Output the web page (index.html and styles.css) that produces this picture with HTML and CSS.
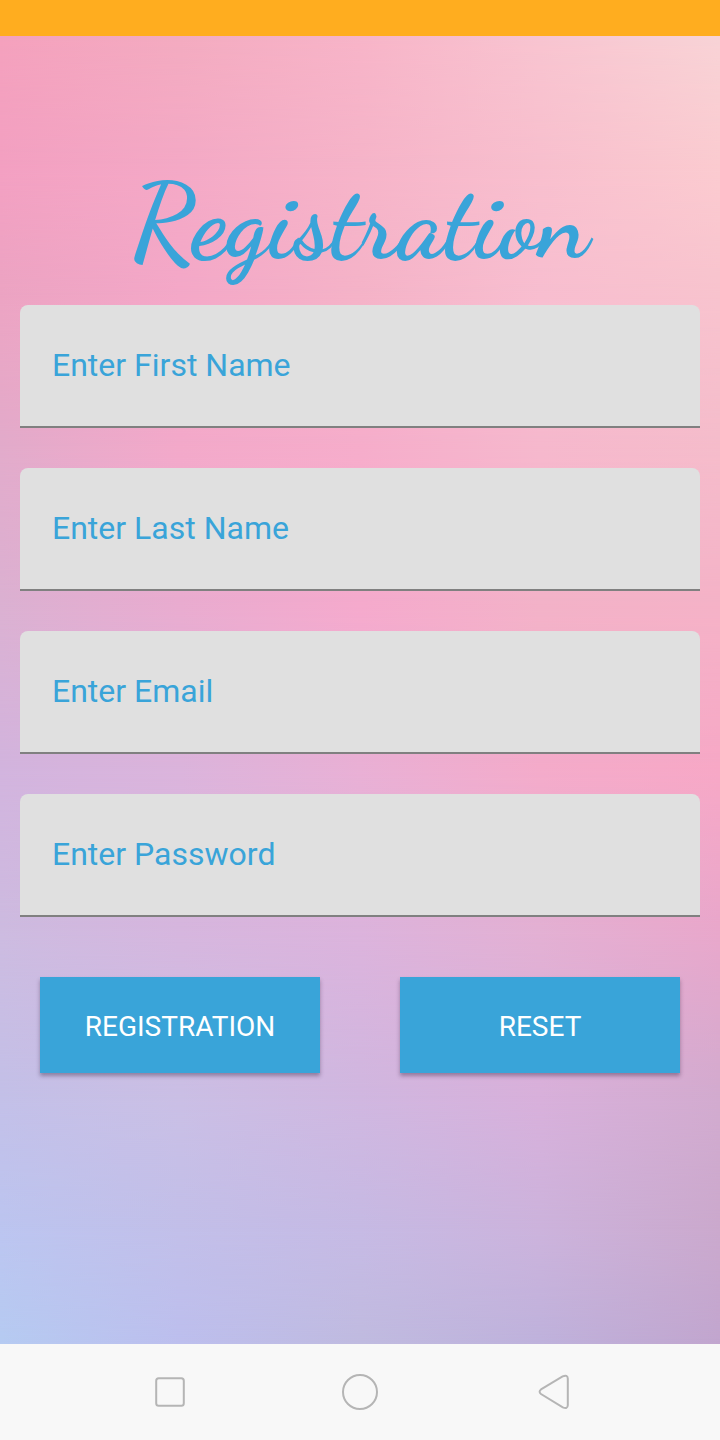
FILE: index.html
```html
<!DOCTYPE html>
<html lang="en">
<head>
<meta charset="utf-8">
<title>Registration</title>
<link rel="stylesheet" href="styles.css">
</head>
<body>
<div class="status"></div>
<main class="screen">
  <div class="wash" aria-hidden="true">
    <i class="tone t10"></i><i class="tone t9"></i><i class="tone t8"></i><i class="tone t7"></i><i class="tone t6"></i>
    <i class="tone t5"></i><i class="tone t4"></i><i class="tone t3"></i><i class="tone t2"></i><i class="tone t1"></i>
  </div>
  <form class="form">
    <h1 class="title">Registration</h1>
    <div class="fields">
      <label class="field">Enter First Name</label>
      <label class="field">Enter Last Name</label>
      <label class="field">Enter Email</label>
      <label class="field">Enter Password</label>
    </div>
    <div class="actions">
      <button class="button" type="button">REGISTRATION</button>
      <button class="button" type="button">RESET</button>
    </div>
  </form>
</main>
<nav class="nav">
  <svg class="icon" viewBox="0 0 40 40"><rect x="6.2" y="6.2" width="27.6" height="27.6" rx="2.5"/></svg>
  <svg class="icon" viewBox="0 0 40 40"><circle cx="20" cy="20" r="17"/></svg>
  <svg class="icon" viewBox="0 0 40 40"><path d="M11 17.4 32.6 4.4Q37.6 2.2 37.8 6.6V33.2Q37.6 37.4 32.8 35.4L11 22Q8.2 19.7 11 17.4Z"/></svg>
</nav>
</body>
</html>
```
FILE: styles.css
```css
* { box-sizing: border-box; }
body { margin: 0; height: 1440px; display: flex; flex-direction: column; font-family: Roboto, sans-serif; overflow: hidden; }
.status { height: 36px; background: #ffad1f; }
.screen { flex: 1; display: grid; grid-template: 1308px / 720px; }
.wash, .form { grid-area: 1 / 1; }
.wash { display: grid; overflow: hidden; }

/* Each tone fades vertically into the one beneath it. */
.tone { grid-area: 1 / 1; background: linear-gradient(90deg, var(--c)); mask-image: linear-gradient(#000 var(--from), transparent var(--to)); }
.t1 { --c: #f4a1bd, #f3abc0, #f7b4c8, #f8c4d0, #f8d3d6; --from: 0px; --to: 134px; }
.t2 { --c: #f3a0c2, #f4a9c6, #f6b4c9, #f8bfce, #fbcbd0; --from: 134px; --to: 264px; }
.t3 { --c: #eca4c3, #f4a8c8, #f5b3c8, #f8bed0, #f8c3ce; --from: 264px; --to: 414px; }
.t4 { --c: #e2abcb, #f3a9ca, #f6adcb, #f6b8cd, #f5bccb; --from: 414px; --to: 574px; }
.t5 { --c: #dbb1d2, #e9acd0, #f5aacd, #f3b2c8, #f5b2c7; --from: 574px; --to: 734px; }
.t6 { --c: #d2b4de, #dbb4dc, #e9b0d5, #f4abca, #f7a8c6; --from: 734px; --to: 894px; }
.t7 { --c: #cdbbe0, #d6b6de, #dcb3dc, #e3b0d3, #e9a7cb; --from: 894px; --to: 1064px; }
.t8 { --c: #c3c0e8, #cabfe5, #d0b7e0, #d8b0db, #d2abcf; --from: 1064px; --to: 1194px; }
.t9 { --c: #bcc5f0, #c2bfe9, #c6bae4, #ccb3dc, #cba9cd; --from: 1194px; --to: 1307px; }
.t10 { --c: #b6cbf2, #bdbfee, #c0bbe0, #bfb2dc, #c2a6cf; mask-image: none; }

.form { z-index: 1; padding: 129px 20px 0; }
.title { margin: 0; height: 140px; text-align: center; font: 700 104px/116px "Dancing Script", cursive; color: #39a4d9; white-space: nowrap; }
.fields { display: flex; flex-direction: column; gap: 40px; }
.field { height: 123px; padding: 0 32px; border-bottom: 2px solid #808080; border-radius: 8px 8px 0 0; background: #e0e0e0; color: #39a4d9; font-size: 32px; line-height: 120px; }
.actions { display: flex; gap: 80px; padding: 60px 20px 0; }
.button { flex: 1; height: 96px; padding: 3px 0 0; border: 0; background: #39a4d9; color: #fff; font: 400 28px/40px Roboto, sans-serif; box-shadow: 0 3px 4px rgba(60, 40, 70, .42); }
.nav { height: 96px; display: flex; justify-content: space-between; align-items: center; padding: 0 150px; background: #f8f8f8; }
.icon { width: 40px; height: 40px; fill: none; stroke: #b5b5b5; stroke-width: 2; }
```
